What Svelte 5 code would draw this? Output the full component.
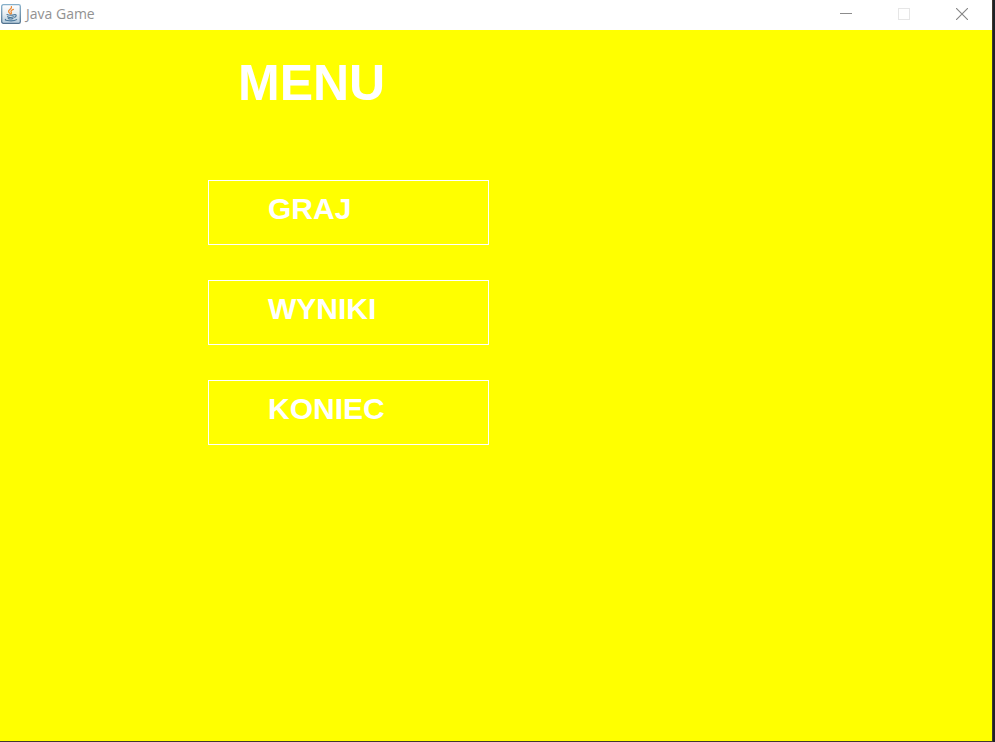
<script>
  const items = ['GRAJ', 'WYNIKI', 'KONIEC'];
</script>

<div class="window">
  <header class="titlebar">
    <svg class="logo" width="20" height="20" viewBox="0 0 20 20" aria-hidden="true">
      <defs>
        <linearGradient id="tile" x1="0" y1="0" x2="0" y2="1">
          <stop offset="0" stop-color="#ffffff" />
          <stop offset="0.5" stop-color="#e6edf2" />
          <stop offset="1" stop-color="#b4cbdc" />
        </linearGradient>
        <linearGradient id="rim" x1="0" y1="0" x2="0" y2="1">
          <stop offset="0" stop-color="#86b0ca" />
          <stop offset="1" stop-color="#53738f" />
        </linearGradient>
      </defs>
      <rect x="0.7" y="0.7" width="18.6" height="18.6" rx="1.6" fill="url(#tile)" stroke="url(#rim)" stroke-width="1.3" />
      <path d="M10.4 2.6C11.6 4.7 7.2 5.6 7.6 7.6C7.8 8.5 8.8 9 9.3 10M12.4 5.4C10.4 6.2 9.5 7 10.2 8.1C10.7 8.9 10.5 9.4 10 10" fill="none" stroke="#ea8a35" stroke-width="1.3" stroke-linecap="round" />
      <path d="M6 10.6C7.5 11.4 11.5 11.4 13 10.7M6.5 12.7C8 13.5 11 13.5 12.5 12.8M7.2 14.5C8.5 15 10.7 15 12 14.5M13.3 10.7C16 10.2 15.6 12.8 13.3 13.3M4.5 15.4C2.6 16.6 12.5 17.8 15.6 15.6" fill="none" stroke="#4a7799" stroke-width="1.1" stroke-linecap="round" />
    </svg>
    <span class="caption">Java Game</span>
    <div class="controls">
      <button aria-label="Minimize">
        <svg width="12" height="12" viewBox="0 0 12 12"><path d="M0 5.5H12" stroke="#8c8c8c" /></svg>
      </button>
      <button aria-label="Maximize" disabled>
        <svg width="12" height="12" viewBox="0 0 12 12"><rect x="0.5" y="0.5" width="11" height="11" fill="none" stroke="#e6e6e6" /></svg>
      </button>
      <button aria-label="Close">
        <svg width="12" height="12" viewBox="0 0 12 12"><path d="M0 0L12 12M12 0L0 12" stroke="#858585" stroke-width="1.1" /></svg>
      </button>
    </div>
  </header>
  <main>
    <h1>MENU</h1>
    <nav>
      {#each items as item}
        <button class="item">{item}</button>
      {/each}
    </nav>
  </main>
</div>

<style>
  :global(body) {
    margin: 0;
    background: #1e2226;
  }
  .window {
    box-sizing: border-box;
    display: flex;
    flex-direction: column;
    min-height: 100vh;
    margin-right: 2px;
    border: solid #41382f;
    border-width: 0 1px 1px 0;
    background: #ffff00;
  }
  .titlebar {
    display: flex;
    align-items: center;
    height: 28px;
    padding-bottom: 2px;
    background: #ffffff;
  }
  .logo {
    margin: 0 5px 0 1px;
  }
  .caption {
    font: 14px/20px "Open Sans", "Noto Sans", sans-serif;
    color: #929292;
  }
  .controls {
    display: flex;
    height: 28px;
    margin: 0 1px 0 auto;
  }
  .controls button {
    display: flex;
    align-items: center;
    justify-content: center;
    width: 58px;
    padding: 0;
    border: 0;
    background: none;
  }
  main {
    flex: 1;
    padding: 25px 0 0 208px;
    font-family: "Liberation Sans", Arial, sans-serif;
    color: #ffffff;
  }
  h1 {
    margin: 0 0 68px 30px;
    font-size: 50px;
    font-weight: bold;
    line-height: 57px;
  }
  nav {
    display: flex;
    flex-direction: column;
    align-items: flex-start;
    gap: 35px;
  }
  .item {
    box-sizing: border-box;
    width: 281px;
    padding: 11px 0 19px 59px;
    border: 1px solid #ffffff;
    background: none;
    color: inherit;
    font: bold 30px/33px "Liberation Sans", Arial, sans-serif;
    text-align: left;
  }
</style>
